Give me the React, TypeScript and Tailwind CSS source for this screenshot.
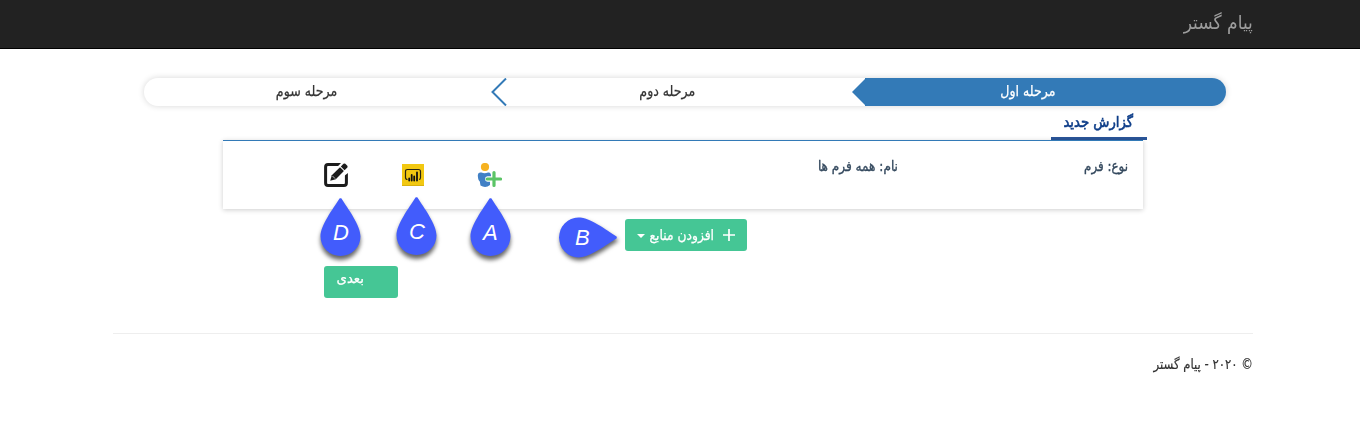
import type { ReactNode } from "react";

function Pin({ letter, className, drop = "up" }: { letter: string; className: string; drop?: "up" | "right" }) {
  return (
    <div className={`absolute ${className}`}>
      <svg
        viewBox="0 0 42 60"
        className={`h-[60px] w-[42px] overflow-visible ${drop === "right" ? "rotate-90 drop-shadow-[3px_-1px_2px_rgba(0,0,0,0.6)]" : "drop-shadow-[0_4px_2px_rgba(0,0,0,0.6)]"}`}
      >
        <path d="M19.500 .5C20 0 21 0 21.500 .5C28 11 40.500 27 40.500 38.500A20 19.500 0 0 1 .5 38.500C.5 27 13 11 19.500 .5Z" fill="#425cfc" />
      </svg>
      <span
        dir="ltr"
        className={`absolute text-[22px] leading-[24px] text-white italic ${drop === "right" ? "top-[18px] left-[9px]" : "top-[23px] left-[13px]"}`}
      >
        {letter}
      </span>
    </div>
  );
}

function Step({ children, active = false }: { children: ReactNode; active?: boolean }) {
  return (
    <div className={`relative flex h-7 flex-1 justify-center pr-[35px] text-[15px] leading-[27px] ${active ? "rounded-r-[14px] bg-[#337ab7] text-white" : "text-[#333]"}`}>
      {children}
    </div>
  );
}

function StepLabel({ children }: { children: ReactNode }) {
  return <span className="block scale-x-[0.84] whitespace-nowrap [-webkit-text-stroke:0.25px_currentColor]">{children}</span>;
}

export default function App() {
  return (
    <div dir="rtl" className="relative h-[435px] w-[1360px] overflow-hidden bg-white font-['DejaVu_Sans','Liberation_Sans',sans-serif] text-[#333]">
      <header className="flex h-[49px] border-b border-black bg-[#222] pr-[107px]">
        <span className="origin-right scale-x-[0.9] text-[19px] leading-[45px] whitespace-nowrap text-[#9d9d9d]">پیام گستر</span>
      </header>

      <main className="mr-[107px] w-[1140px]">
        <div className="mt-[29px] mr-[27px] flex w-[1082px] rounded-[14px] shadow-[0_0_6px_rgba(0,0,0,0.16)]">
          <Step active>
            <StepLabel>مرحله اول</StepLabel>
            <svg viewBox="0 0 14 28" className="absolute top-0 -left-[13px] h-7 w-3.5">
              <path d="M14 0L0 14L14 28Z" fill="#337ab7" />
            </svg>
          </Step>
          <Step>
            <StepLabel>مرحله دوم</StepLabel>
            <svg viewBox="0 0 16 28" className="absolute top-0 -left-[14px] h-7 w-4" fill="none" stroke="#337ab7" strokeWidth="2">
              <path d="M15 .5L1.500 14L15 27.500" />
            </svg>
          </Step>
          <Step>
            <StepLabel>مرحله سوم</StepLabel>
          </Step>
        </div>

        <div className="mr-[106px] h-[34px] w-[96px] border-b-[3px] border-[#2a5599] pr-[14px] text-[15px] leading-[33px] text-[#0c3c88] [-webkit-text-stroke:0.6px_currentColor]">
          <span className="block origin-right scale-x-[0.88] whitespace-nowrap">گزارش جدید</span>
        </div>

        <section className="mr-[110px] flex h-[69px] w-[920px] border-t border-[#337ab7] shadow-[0_1px_5px_rgba(0,0,0,0.2)]">
          <div className="w-[230px] pt-[15px] pr-[15px] text-[14px] leading-[20px] text-[#34495e] [-webkit-text-stroke:0.35px_currentColor]">
            <span className="block origin-right scale-x-[0.85] whitespace-nowrap">نوع: فرم</span>
          </div>
          <div className="w-[396px] pt-[15px] pr-[15px] text-[14px] leading-[20px] text-[#34495e] [-webkit-text-stroke:0.35px_currentColor]">
            <span className="block origin-right scale-x-[0.865] whitespace-nowrap">نام: همه فرم ها</span>
          </div>
          <div dir="ltr" className="flex w-[294px] pt-[22px] pl-[101px]">
            <svg viewBox="0 0 24 24" className="h-6 w-6">
              <rect x="1.600" y="1.600" width="20.800" height="20.800" rx="2.400" fill="none" stroke="#1c1c1c" strokeWidth="3" />
              <path d="M17 0H24V10L13.500 18L5 19.500L7 10.500Z" fill="#fff" />
              <path d="M6.200 17.800L7.800 12.300L16 4.200L19.900 8.100L11.800 16.200Z" fill="#1c1c1c" />
              <path d="M16.800 3.500L19.500 .8Q20.400 0 21.300 .8L23.300 2.800Q24 3.700 23.300 4.600L20.600 7.300Z" fill="#1c1c1c" />
              <path d="M8.400 12.900L11.200 15.700" stroke="#fff" strokeWidth=".7" />
            </svg>
            <svg viewBox="0 0 22 22" className="mt-px ml-[54px] h-[22px] w-[22px]">
              <rect width="22" height="22" fill="#f2c811" />
              <rect y="21" width="22" height="1" fill="#d9b20f" />
              <path d="M5.500 15.500Q3.500 15.500 3.500 13.500V7.500Q3.500 5.500 5.500 5.500H16.500Q18.500 5.500 18.500 7.500V13.500Q18.500 15.500 17 15.500" fill="none" stroke="#2a2512" strokeWidth="1.200" />
              <path d="M7.200 16.500V14.500M9.700 16.500V11M12.200 16.500V12.500M15 16.500V8.500" stroke="#111" strokeWidth="1.800" strokeLinecap="round" />
            </svg>
            <svg viewBox="0 0 25 25" className="ml-[53px] h-[25px] w-[25px]">
              <circle cx="8" cy="4" r="4.100" fill="#f6b221" />
              <path d="M3 9.500H4.500Q7.500 11 11 9.500H12.300Q13.800 10 14 12V13.200H10.500Q8 13.500 8 16Q8 18.500 10.500 18.800H13V22Q8.500 25.500 3.500 22.500L2.800 18.500Q.8 17 .8 12Q1 9.800 3 9.500Z" fill="#4180c5" />
              <path d="M17 9.500V22.500M10.200 16H23.500" stroke="#5bc466" strokeWidth="3.200" strokeLinecap="round" />
            </svg>
          </div>
        </section>

        <div className="mt-[10px] mr-[506px] flex h-8 w-[122px] items-start rounded-[3px] bg-[#45c695] pr-3 text-[14px] leading-[32px] text-white">
          <svg viewBox="0 0 12 12" className="mt-[10px] h-3 w-3 shrink-0" stroke="white" strokeWidth="1.700">
            <path d="M6 0V12M0 6H12" />
          </svg>
          <span className="mr-[9px] block w-[65px] origin-right scale-x-[0.88] whitespace-nowrap [-webkit-text-stroke:0.25px_currentColor]">افزودن منابع</span>
          <svg viewBox="0 0 8 4" className="mt-[15px] mr-1 h-1 w-2 shrink-0">
            <path d="M0 0H8L4 4Z" fill="white" />
          </svg>
        </div>

        <div className="mt-[15px] mr-[855px] h-8 w-[74px] rounded-[3px] bg-[#45c695] pr-[34px] text-[14px] leading-[25px] text-white">
          <span className="block origin-right scale-x-[0.95] whitespace-nowrap [-webkit-text-stroke:0.25px_currentColor]">بعدی</span>
        </div>

        <footer className="mt-[35px] border-t border-[#eee] pt-[20px] text-[14px] leading-[20px]">
          <span className="block origin-right scale-x-[0.835] whitespace-nowrap [-webkit-text-stroke:0.2px_currentColor]">© ۲۰۲۰ - پیام گستر</span>
        </footer>
      </main>

      <div className="font-['Liberation_Sans',sans-serif]">
        <Pin letter="D" className="top-[198px] left-[320px]" />
        <Pin letter="C" className="top-[197px] left-[396px]" />
        <Pin letter="A" className="top-[198px] left-[470px]" />
        <Pin letter="B" className="top-[208px] left-[566px]" drop="right" />
      </div>
    </div>
  );
}
